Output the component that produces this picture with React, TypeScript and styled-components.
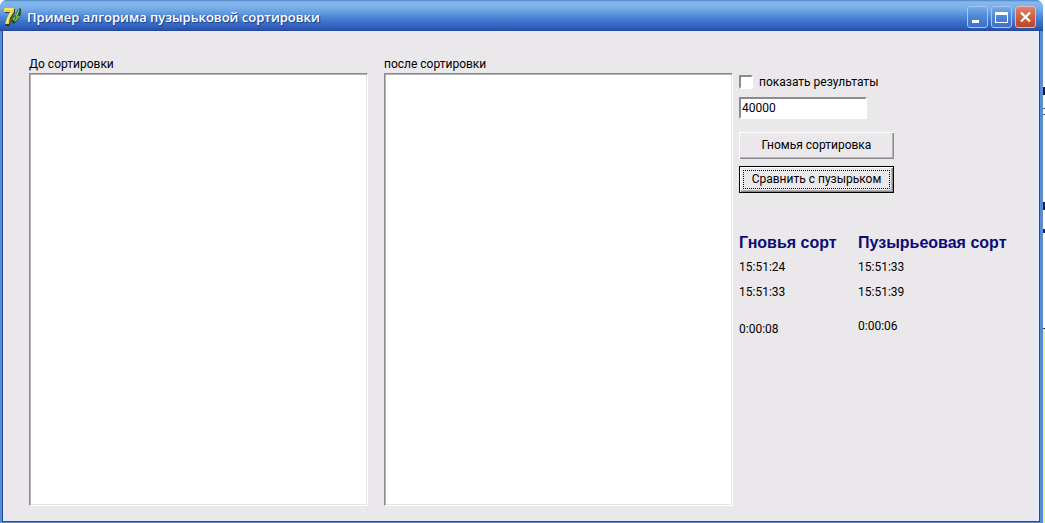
import React from "react";
import styled, { createGlobalStyle } from "styled-components";

const GlobalStyle = createGlobalStyle`
  *, *::before, *::after { box-sizing: border-box; }
  body {
    margin: 0;
    background: #fff;
    color: #000;
    font: 12px/16px Roboto, "Liberation Sans", sans-serif;
  }
`;

const Desktop = styled.div`
  display: flex;
  min-height: 100vh;
`;

const Window = styled.main`
  flex: 1;
  display: flex;
  flex-direction: column;
  background: #5b8bd0;
  border-radius: 7px 7px 0 0;
  overflow: hidden;
`;

const Behind = styled.div`
  width: 2px;
  display: flex;
  flex-direction: column;
`;

const BehindPage = styled.div`
  flex: 328;
  border-bottom: 1px solid #333;
  background:
    linear-gradient(#1a1a4a, #1a1a4a) 0 87px / 2px 8px no-repeat,
    linear-gradient(#55557a, #55557a) 0 108px / 2px 1px no-repeat,
    linear-gradient(#55557a, #55557a) 0 114px / 2px 1px no-repeat,
    linear-gradient(#14206a, #14206a) 0 202px / 2px 8px no-repeat,
    linear-gradient(#14206a, #14206a) 0 229px / 2px 4px no-repeat,
    #fbfdff;
`;

const BehindNote = styled.div`
  flex: 194;
  background: #e4f68c;
`;

const TitleBar = styled.header`
  height: 31px;
  display: flex;
  align-items: center;
  gap: 5px;
  padding: 2px 7px 0 3px;
  background: linear-gradient(
    #4f83c6 0, #86b9ee 2px, #7db3ec 6px, #6ba2e4 11px, #4f86d6 17px,
    #3c70cb 22px, #3363c0 26px, #2c56b0 29px, #234691 31px
  );
`;

const Title = styled.h1`
  flex: 1;
  margin: 0;
  color: #fff;
  font: 600 13px/18px "Open Sans", "Noto Sans", sans-serif;
  text-shadow: 1px 1px 1px #1d3f8c;
  white-space: nowrap;
`;

const Controls = styled.div`
  display: flex;
  gap: 3px;
`;

const ControlButton = styled.button<{ $close?: boolean }>`
  width: 21px;
  height: 22px;
  padding: 0;
  display: grid;
  place-items: center;
  border: 1px solid ${(p) => (p.$close ? "#e4b9b4" : "#a5c8f3")};
  border-radius: 3px;
  background: ${(p) =>
    p.$close
      ? "linear-gradient(#d98472, #d0603f 50%, #bd4524)"
      : "linear-gradient(#78abe8, #4f85d7 50%, #3d6dc9)"};
`;

const Client = styled.section`
  flex: 1;
  display: flex;
  margin: 0 3px 1px 2px;
  padding: 25px 0 15px 26px;
  background: #ebe8eb;
  border: solid #234b9c;
  border-width: 0 1px 1px;
  box-shadow: inset -4px 0 #e6eafa;
`;

const ListColumn = styled.div<{ $grow: number }>`
  flex: ${(p) => p.$grow} 1 0;
  min-width: 0;
  display: flex;
  flex-direction: column;
  gap: 1px;
  margin-right: ${(p) => (p.$grow === 339 ? 16 : 6)}px;
`;

const sunken = `
  background: #fff;
  border: 2px solid;
  border-color: #8c8a8c #fff #fff #8c8a8c;
  border-radius: 0;
  outline: 0;
  color: #000;
`;

const ListBox = styled.textarea`
  ${sunken}
  flex: 1;
  width: 100%;
  resize: none;
  border-width: 1px;
  box-shadow: inset 1px 1px #b4b2b4, inset -1px -1px #e6e3e6;
  font: inherit;
`;

const Side = styled.div`
  width: 300px;
  flex: none;
  display: flex;
  flex-direction: column;
  align-items: flex-start;
  padding-top: 18px;
`;

const CheckLabel = styled.label`
  display: flex;
  align-items: center;
  gap: 6px;
`;

const CheckBox = styled.input`
  ${sunken}
  appearance: none;
  width: 14px;
  height: 14px;
  margin: 0;
`;

const CountInput = styled.input`
  ${sunken}
  width: 128px;
  height: 22px;
  margin: 7px 0 13px;
  padding: 0 1px;
  font: inherit;
`;

const PushButton = styled.button<{ $focused?: boolean }>`
  width: 155px;
  height: 27px;
  margin-bottom: 7px;
  padding: ${(p) => (p.$focused ? "2px 3px" : "2px")};
  border: ${(p) => (p.$focused ? "1px solid #000" : "0")};
  background: #ebe8eb;
  box-shadow: inset 1px 1px #fff, inset -1px -1px #8c8a8c, inset -2px -2px #b4b2b4;
  color: #000;
  font: inherit;
  line-height: 17px;
`;

const FocusText = styled.span<{ $focused?: boolean }>`
  display: block;
  border: 1px dotted ${(p) => (p.$focused ? "#000" : "transparent")};
`;

const Results = styled.table`
  margin-top: 32px;
  border-collapse: collapse;
  text-align: left;

  th {
    width: 119px;
    height: 22px;
    padding: 0;
    color: #0a0a78;
    font: bold 16px/20px "Liberation Sans", sans-serif;
    white-space: nowrap;
  }
  td { height: 25px; padding: 0; }
  tr:last-child td { height: 49px; }
  tr:last-child td:last-child { padding-bottom: 6px; }
`;

const DelphiIcon = () => (
  <svg width="19" height="20" viewBox="0 0 19 20" aria-hidden="true">
    <path d="M2 2h10v4L8 12l-1 7H2l2-7 3-6H2z" fill="#3b4216" />
    <path d="M1 1h10v4L7 11l-1 6H2l2-6 3-6H1z" fill="#e2d548" />
    <path d="M2 2h8M4 16l1-5 3-6" stroke="#fbf8a4" fill="none" />
    <path d="M9 11l3-3 1 1 1-5 3-3 1 1v5l-3 6-4 4-3-2z" fill="#24502c" />
    <path d="M10 13l2-3M13 10l3-7M12 14l4-5" stroke="#8fce5c" strokeWidth="1.4" fill="none" />
  </svg>
);

export default function App() {
  return (
    <>
      <GlobalStyle />
      <Desktop>
        <Window>
          <TitleBar>
            <DelphiIcon />
            <Title>Пример алгорима пузырьковой сортировки</Title>
            <Controls>
              <ControlButton aria-label="Свернуть">
                <svg width="19" height="20"><path d="M4 13h7v3H4z" fill="#fff" /></svg>
              </ControlButton>
              <ControlButton aria-label="Развернуть">
                <svg width="19" height="20">
                  <path d="M3 5h13v11H3zM4 8v7h11V8z" fill="#fff" fillRule="evenodd" />
                </svg>
              </ControlButton>
              <ControlButton $close aria-label="Закрыть">
                <svg width="19" height="20">
                  <path d="M5 5.500l9 9M14 5.500l-9 9" stroke="#fff" strokeWidth="2.200" />
                </svg>
              </ControlButton>
            </Controls>
          </TitleBar>
          <Client>
            <ListColumn $grow={339}>
              <label htmlFor="before">До сортировки</label>
              <ListBox id="before" />
            </ListColumn>
            <ListColumn $grow={349}>
              <label htmlFor="after">после сортировки</label>
              <ListBox id="after" />
            </ListColumn>
            <Side>
              <CheckLabel>
                <CheckBox type="checkbox" />
                показать результаты
              </CheckLabel>
              <CountInput aria-label="Количество элементов" defaultValue="40000" />
              <PushButton>
                <FocusText>Гномья сортировка</FocusText>
              </PushButton>
              <PushButton $focused>
                <FocusText $focused>Сравнить с пузырьком</FocusText>
              </PushButton>
              <Results>
                <thead>
                  <tr><th>Гновья сорт</th><th>Пузырьеовая сорт</th></tr>
                </thead>
                <tbody>
                  <tr><td>15:51:24</td><td>15:51:33</td></tr>
                  <tr><td>15:51:33</td><td>15:51:39</td></tr>
                  <tr><td>0:00:08</td><td>0:00:06</td></tr>
                </tbody>
              </Results>
            </Side>
          </Client>
        </Window>
        <Behind>
          <BehindPage />
          <BehindNote />
        </Behind>
      </Desktop>
    </>
  );
}
